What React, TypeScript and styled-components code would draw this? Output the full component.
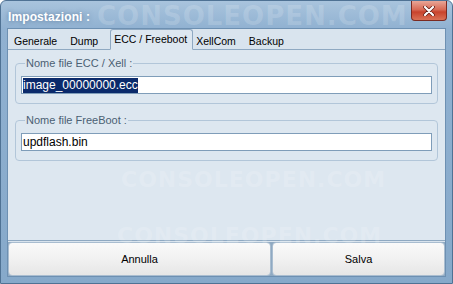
import React from "react";
import styled, { createGlobalStyle } from "styled-components";

const Global = createGlobalStyle`
  html, body { margin: 0; padding: 0; background: #ffffff; }
  body { font-family: "Liberation Sans", Arial, sans-serif; }
`;

const Window = styled.div`
  position: relative;
  width: 453px;
  height: 284px;
  box-sizing: border-box;
  display: flex;
  flex-direction: column;
  overflow: hidden;
  border: 1px solid #4f7294;
  border-radius: 6px 6px 0 0;
  background: linear-gradient(180deg, #a9c4dd 0px, #90b1d1 28px, #86a9ca 100%);
`;

const TitleBar = styled.div`
  height: 27px;
  display: flex;
  justify-content: space-between;
  align-items: flex-start;
  padding-left: 7px;
  padding-right: 5px;
`;

const Title = styled.span`
  margin-top: 9px;
  font-size: 12px;
  font-weight: bold;
  color: #ffffff;
  text-shadow: 0 0 4px rgba(40, 70, 110, 0.55);
  letter-spacing: 0.1px;
`;

const CloseButton = styled.div`
  width: 36px;
  height: 20px;
  display: flex;
  align-items: center;
  justify-content: center;
  box-sizing: border-box;
  border: 1px solid #7a2a22;
  border-top: none;
  border-radius: 0 0 4px 4px;
  background: linear-gradient(180deg, #e8a697 0%, #d86a55 45%, #c8432c 58%, #da7156 100%);
`;

const Client = styled.div`
  flex: 1;
  margin: 0 6px 6px 6px;
  display: flex;
  flex-direction: column;
  background: #d9e4ee;
  border: 1px solid #6d90b2;
`;

const TabStrip = styled.div`
  height: 20px;
  display: flex;
  align-items: flex-end;
  position: relative;
  z-index: 1;
`;

const Tab = styled.div<{ $active?: boolean }>`
  box-sizing: border-box;
  height: ${(p) => (p.$active ? "21px" : "18px")};
  margin: ${(p) => (p.$active ? "0 -3px -1px 5px" : "0 1px 0 0")};
  padding: ${(p) => (p.$active ? "0 5px 1px 3px" : "0 5px")};
  display: flex;
  align-items: center;
  font-size: 10.5px;
  color: #000;
  border: ${(p) => (p.$active ? "1px solid #8fa9c2" : "1px solid transparent")};
  border-bottom: ${(p) => (p.$active ? "1px solid #dde7f0" : "none")};
  border-radius: 3px 3px 0 0;
  background: ${(p) => (p.$active ? "#dde7f0" : "transparent")};
`;

const Panel = styled.div`
  flex: 1;
  margin: 0 0 1px 0;
  border-top: 1px solid #8fa9c2;
  border-bottom: 1px solid #8fa9c2;
  background: #dde7f0;
  display: flex;
  flex-direction: column;
  gap: 10px;
  padding: 7px 7px 0 7px;
`;

const Group = styled.fieldset`
  margin: 0;
  padding: 7px 5px 9px 5px;
  border: 1px solid #b2c6d9;
  border-radius: 4px;
  display: flex;
  flex-direction: column;
`;

const Legend = styled.legend`
  font-size: 11px;
  color: #4b5f73;
  padding: 0 1px;
  margin-left: 4px;
`;

const Input = styled.div`
  height: 18px;
  box-sizing: border-box;
  border: 1px solid #7f9db9;
  background: #ffffff;
  display: flex;
  align-items: center;
  padding-left: 1px;
  font-size: 12px;
  color: #000;
`;

const Selected = styled.span`
  background: #0b2a6b;
  color: #ffffff;
  line-height: 15px;
`;

const ButtonRow = styled.div`
  height: 34px;
  display: grid;
  grid-template-columns: 263px 1fr;
  gap: 1px;
  background: #8fa9c2;
`;

const Button = styled.div`
  display: flex;
  align-items: center;
  justify-content: center;
  font-size: 11px;
  color: #000;
  box-sizing: border-box;
  border: 1px solid #a9bdd0;
  border-radius: 4px;
  background: linear-gradient(180deg, #fafafa 0%, #f1f1f1 50%, #e6e6e6 100%);
`;

const Watermark = styled.div<{ $size: number }>`
  position: absolute;
  font-family: "DejaVu Sans", sans-serif;
  font-weight: bold;
  font-size: ${(p) => p.$size}px;
  line-height: 1;
  letter-spacing: 1px;
  color: rgba(255, 255, 255, 0.16);
  pointer-events: none;
  white-space: nowrap;
  z-index: 5;
`;

export default function App() {
  return (
    <>
      <Global />
      <Window>
        <TitleBar>
          <Title>Impostazioni :</Title>
          <CloseButton>
            <svg width="12" height="10" viewBox="0 0 12 10">
              <path d="M2 1 L10 9 M10 1 L2 9" stroke="#5a1810" strokeWidth="3.6" strokeLinecap="round" />
              <path d="M2 1 L10 9 M10 1 L2 9" stroke="#ffffff" strokeWidth="2.2" strokeLinecap="round" />
            </svg>
          </CloseButton>
        </TitleBar>
        <Client>
          <TabStrip>
            <Tab>Generale</Tab>
            <Tab>Dump</Tab>
            <Tab $active>ECC / Freeboot</Tab>
            <Tab>XellCom</Tab>
            <Tab>Backup</Tab>
          </TabStrip>
          <Panel>
            <Group>
              <Legend>Nome file ECC / Xell :</Legend>
              <Input>
                <Selected>image_00000000.ecc</Selected>
              </Input>
            </Group>
            <Group>
              <Legend>Nome file FreeBoot :</Legend>
              <Input>updflash.bin</Input>
            </Group>
          </Panel>
          <ButtonRow>
            <Button>Annulla</Button>
            <Button>Salva</Button>
          </ButtonRow>
        </Client>
        <Watermark $size={26} style={{ left: 96, top: 2 }}>CONSOLEOPEN.COM</Watermark>
        <Watermark $size={22} style={{ left: 120, top: 168 }}>CONSOLEOPEN.COM</Watermark>
        <Watermark $size={22} style={{ left: 116, top: 224 }}>CONSOLEOPEN.COM</Watermark>
      </Window>
    </>
  );
}
